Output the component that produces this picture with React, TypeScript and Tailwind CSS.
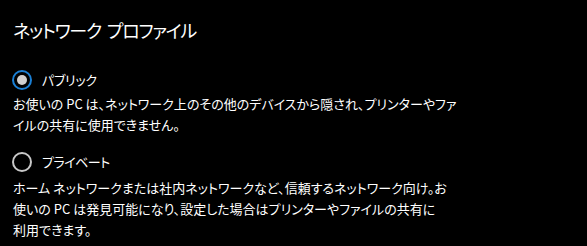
import React from "react";

function Radio({ checked }: { checked: boolean }) {
  return checked ? (
    <span className="flex h-[20px] w-[20px] shrink-0 items-center justify-center rounded-full border-2 border-[#1a7fd4]">
      <span className="h-[10px] w-[10px] rounded-full bg-[#d0d0d0]" />
    </span>
  ) : (
    <span className="h-[20px] w-[20px] shrink-0 rounded-full border-2 border-[#c8c8c8]" />
  );
}

export default function App() {
  return (
    <div className="h-[246px] w-[587px] overflow-hidden bg-black pl-[12px] pt-[15px] text-white [font-family:'Noto_Sans_CJK_JP','Noto_Sans',sans-serif] [font-feature-settings:'palt']">
      <div className="pl-[1px] text-[18px] leading-[30px] tracking-[-1.2px]">
        ネットワーク<span className="ml-[3px]"> </span>プロファイル
      </div>
      <div className="mt-[25px] flex h-[20px] items-center gap-[10px]">
        <Radio checked />
        <span className="text-[13px] leading-[20px] tracking-[-0.3px]">パブリック</span>
      </div>
      <div className="mt-[3px] pl-[1px] text-[13px] leading-[21px]">
        お使いの PC は、ネットワーク上のその他のデバイスから隠され、プリンターやファ
        <br />
        イルの共有に使用できません。
      </div>
      <div className="mt-[17px] flex h-[20px] items-center gap-[10px]">
        <Radio checked={false} />
        <span className="text-[13px] leading-[20px] tracking-[-0.5px]">プライベート</span>
      </div>
      <div className="mt-[5px] pl-[1px] text-[13px] leading-[21px]">
        ホーム ネットワークまたは社内ネットワークなど、信頼するネットワーク向け。お
        <br />
        使いの PC は発見可能になり、設定した場合はプリンターやファイルの共有に
        <br />
        利用できます。
      </div>
    </div>
  );
}
